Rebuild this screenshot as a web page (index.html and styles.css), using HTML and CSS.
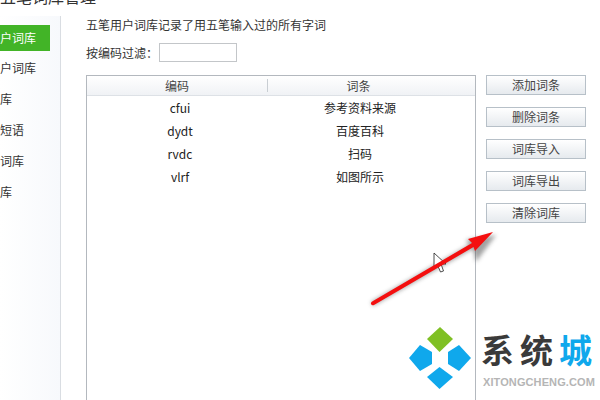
FILE: index.html
```html
<!DOCTYPE html>
<html lang="zh-CN">
<head>
    <meta charset="UTF-8">
    <meta name="viewport" content="width=device-width, initial-scale=1.0">
    <title>五笔词库管理</title>
    <link rel="stylesheet" href="styles.css">
</head>
<body>
    <div class="page">
        <h2 class="title">五笔词库管理</h2>
        <div class="content">
            <div class="sidebar">
                <div class="side-item active">户词库</div>
                <div class="side-item">户词库</div>
                <div class="side-item">库</div>
                <div class="side-item">短语</div>
                <div class="side-item">词库</div>
                <div class="side-item">库</div>
            </div>
            <div class="main">
                <p class="intro">五笔用户词库记录了用五笔输入过的所有字词</p>
                <div class="filter">
                    <label for="codeFilter">按编码过滤：</label>
                    <input type="text" id="codeFilter">
                </div>
                <div class="manager">
                    <div class="table">
                        <div class="table-head">
                            <div class="cell first">编码</div>
                            <div class="cell">词条</div>
                        </div>
                        <div class="row"><div class="cell">cfui</div><div class="cell">参考资料来源</div></div>
                        <div class="row"><div class="cell">dydt</div><div class="cell">百度百科</div></div>
                        <div class="row"><div class="cell">rvdc</div><div class="cell">扫码</div></div>
                        <div class="row"><div class="cell">vlrf</div><div class="cell">如图所示</div></div>
                    </div>
                    <div class="actions">
                        <button>添加词条</button>
                        <button>删除词条</button>
                        <button>词库导入</button>
                        <button>词库导出</button>
                        <button>清除词库</button>
                    </div>
                </div>
            </div>
        </div>
    </div>

    <!-- annotation drawn over the screenshot -->
    <svg class="overlay" width="600" height="400" viewBox="0 0 600 400">
        <defs>
            <filter id="soft" x="-20%" y="-20%" width="140%" height="140%">
                <feGaussianBlur stdDeviation="2"></feGaussianBlur>
            </filter>
        </defs>
        <g fill="#555" opacity="0.55" filter="url(#soft)">
            <path d="M373 306 L472 249 L475 254 L474 252 L476 262 L496 235 L466 240 L469 245 L371 302 Z"></path>
        </g>
        <path d="M434 253 L434 268 L437.5 265 L440.5 272 L443.5 271 L441 264 L446 264 Z" fill="#fff" stroke="#222" stroke-width="0.8"></path>
        <path d="M371 304 Q370.5 302 373 301 L472 243 L468 239 L493 232 L475 251 L473.5 247 L374 305 Q372 306 371 304 Z" fill="#f40f0f"></path>
        <path d="M440 327 L453 339 L439.5 352 L427 339 Z" fill="#7fc024"></path>
        <path d="M409 358 L420 345 L432 352 L432 364 L420 371 Z" fill="#0fa8ec"></path>
        <path d="M471 358 L459 345 L448 352 L448 364 L459 371 Z" fill="#0fa8ec"></path>
        <path d="M439.5 367 L453 377 L439.5 389 L427 377 Z" fill="#0fa8ec"></path>
    </svg>
    <div class="brand">
        <div class="brand-name">系统<span class="brand-accent">城</span></div>
        <div class="brand-url">XITONGCHENG.COM</div>
    </div>
</body>
</html>
```

FILE: styles.css
```css
* {
    box-sizing: border-box;
}
body {
    margin: 0;
    width: 600px;
    height: 400px;
    overflow: hidden;
    position: relative;
    background-color: #fff;
    color: #333;
    font-family: "Noto Sans CJK SC", "Liberation Sans", sans-serif;
    font-size: 12px;
}
.page {
    height: 400px;
    display: flex;
    flex-direction: column;
}
.title {
    margin: -14px 0 0;
    height: 30px;
    line-height: 20px;
    font-size: 16px;
    font-weight: normal;
    color: #333;
}
.content {
    flex: 1;
    display: flex;
    min-height: 0;
}
.sidebar {
    width: 61px;
    padding-top: 9px;
    border-right: 1px solid #d9dde2;
    background: linear-gradient(to right, #fff, #f7f9fc);
}
.side-item {
    width: 50px;
    height: 26px;
    line-height: 26px;
    margin-bottom: 5px;
    white-space: nowrap;
}
.side-item.active {
    margin-bottom: 4px;
    background-color: #42b427;
    color: #fff;
}
.main {
    flex: 1;
    padding: 0 0 0 25px;
    min-width: 0;
}
.intro {
    margin: 0;
    height: 19px;
    line-height: 18px;
}
.filter {
    display: flex;
    align-items: center;
    margin-top: 8px;
    height: 19px;
}
.filter label {
    width: 73px;
}
.filter input {
    width: 78px;
    height: 19px;
    border: 1px solid #c3c6c9;
    background-color: #fff;
    padding: 2px;
}
.manager {
    display: flex;
    gap: 10px;
    margin-top: 13px;
}
.table {
    width: 390px;
    height: 340px;
    border: 1px solid #b3b8be;
    color: #222;
}
.table-head {
    display: flex;
    height: 20px;
    align-items: center;
    background: linear-gradient(to bottom, #fff, #f0f2f5);
    border-bottom: 1px solid #dde1e6;
    color: #444;
}
.table-head .cell {
    width: 181px;
}
.table-head .first {
    border-right: 1px solid #c9ced3;
    height: 13px;
    line-height: 13px;
}
.row {
    display: flex;
    height: 23px;
    line-height: 23px;
    padding-left: 3px;
}
.cell {
    width: 180px;
    text-align: center;
}
.actions {
    display: flex;
    flex-direction: column;
    gap: 12px;
}
button {
    width: 100px;
    height: 20px;
    padding: 0;
    border: 1px solid #b7c0c8;
    background: linear-gradient(to bottom, #fff, #e6eaee);
    color: #444;
    font-family: inherit;
    font-size: 12px;
    line-height: 18px;
}
.overlay {
    position: absolute;
    left: 0;
    top: 0;
}
.brand {
    position: absolute;
    left: 481px;
    top: 329px;
    width: 119px;
}
.brand-name {
    font-size: 33px;
    line-height: 40px;
    font-weight: 700;
    letter-spacing: 6px;
    color: #3a3a3a;
    white-space: nowrap;
}
.brand-accent {
    color: #0fa8ec;
}
.brand-url {
    font-family: "Liberation Sans", sans-serif;
    font-size: 11px;
    line-height: 12px;
    font-weight: 700;
    letter-spacing: 0.1px;
    color: #b5b5b5;
    margin-top: 7px;
    padding-left: 2px;
    white-space: nowrap;
}
```
